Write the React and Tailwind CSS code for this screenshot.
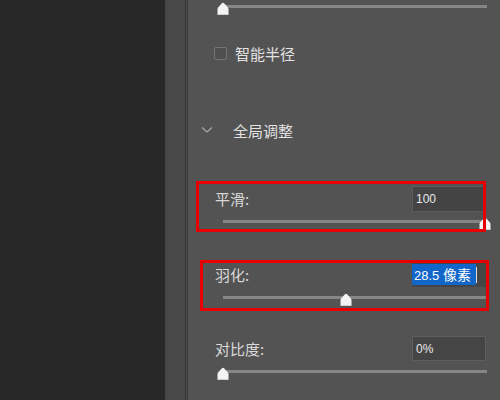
import React from "react";

const cjk = { fontFamily: '"Noto Sans CJK SC", "Noto Sans", sans-serif' };
const num = { fontFamily: '"Liberation Sans", Arial, sans-serif' };

function Thumb({ className }) {
  return (
    <svg width="12" height="13" viewBox="0 0 12 13" className={className}>
      <path
        d="M0.5 12.5 V7.2 Q0.5 6.2 1.3 5.3 L4.9 1.3 Q6 0.2 7.1 1.3 L10.7 5.3 Q11.5 6.2 11.5 7.2 V12.5 Z"
        fill="#f4f4f4"
      />
      <path d="M0.5 12.5 H11.5" stroke="#cfcfcf" strokeWidth="1" />
    </svg>
  );
}

function SliderOnly({ pos, mr = "mr-[13px]" }) {
  return (
    <div className={`relative h-[13px] ml-[35px] ${mr}`}>
      <div className="absolute left-0 right-0 top-[3px] h-[3px] bg-[#858585]" />
      <div className="absolute top-0" style={{ left: `calc(${pos}% - 6px)` }}>
        <Thumb />
      </div>
    </div>
  );
}

function Row({ label, children }) {
  return (
    <div className="flex items-center justify-between pl-[27px] pr-[14px] h-[25px]">
      <span className="text-[15px] text-[#d8d8d8] leading-none" style={cjk}>
        {label}
      </span>
      {children}
    </div>
  );
}

export default function App() {
  return (
    <div className="flex w-[500px] h-[400px] overflow-hidden">
      <div className="w-[165px] bg-[#282828]" />
      <div className="w-[20px] bg-[#484848]" />
      <div className="w-[1px] bg-[#353535]" />
      <div className="w-[1px] bg-[#4a4a4a]" />
      <div className="w-[1px] bg-[#383838]" />
      <div className="flex-1 bg-[#535353] flex flex-col">
        <div className="mt-[2px]">
          <SliderOnly pos={0} />
        </div>

        <div className="mt-[30px] h-[16px] flex items-center pl-[26px]">
          <div className="w-[13px] h-[13px] rounded-[2px] border border-[#757575] bg-[#4f4f4f]" />
          <span className="ml-[8px] text-[15px] text-[#e2e2e2] leading-none" style={cjk}>
            智能半径
          </span>
        </div>

        <div className="mt-[59px] h-[20px] flex items-center pl-[13px]">
          <svg width="12" height="8" viewBox="0 0 12 8">
            <path d="M1 1.5 L6 6 L11 1.5" fill="none" stroke="#a8a8a8" strokeWidth="1.3" />
          </svg>
          <span className="ml-[20px] text-[15px] text-[#e2e2e2] leading-none" style={cjk}>
            全局调整
          </span>
        </div>

        <div className="relative mt-[46px]">
          <Row label="平滑:">
            <div className="w-[74px] h-[26px] bg-[#444444] border border-[#5c5c5c] flex items-center pl-[3px]">
              <span className="text-[12px] text-[#e8e8e8]" style={num}>100</span>
            </div>
          </Row>
          <div className="mt-[6px]">
            <SliderOnly pos={100} mr="mr-[15px]" />
          </div>
          <div className="absolute left-[8px] top-[-5px] w-[290px] h-[51px] border-[3px] border-[#e60000]" />
        </div>

        <div className="relative mt-[32px]">
          <Row label="羽化:">
            <div className="w-[74px] h-[25px] bg-[#454545] flex items-center">
              <div className="h-[21px] w-[64px] bg-[#1266c9] flex items-center pl-[2px]">
                <span className="text-[13px] text-white whitespace-nowrap leading-none" style={num}>
                  28.5 <span style={cjk} className="text-[14px]">像素</span>
                </span>
              </div>
              <div className="w-[1px] h-[16px] bg-[#dddddd]" />
            </div>
          </Row>
          <div className="mt-[6px]">
            <SliderOnly pos={46.6} />
          </div>
          <div className="absolute left-[12px] top-[-2px] w-[289px] h-[51px] border-[3px] border-[#e60000]" />
        </div>

        <div className="relative mt-[30px]">
          <Row label="对比度:">
            <div className="w-[74px] h-[25px] bg-[#454545] border border-[#5e5e5e] flex items-center pl-[3px]">
              <span className="text-[12px] text-[#e8e8e8]" style={num}>0%</span>
            </div>
          </Row>
          <div className="mt-[6px]">
            <SliderOnly pos={0} />
          </div>
        </div>
      </div>
    </div>
  );
}
